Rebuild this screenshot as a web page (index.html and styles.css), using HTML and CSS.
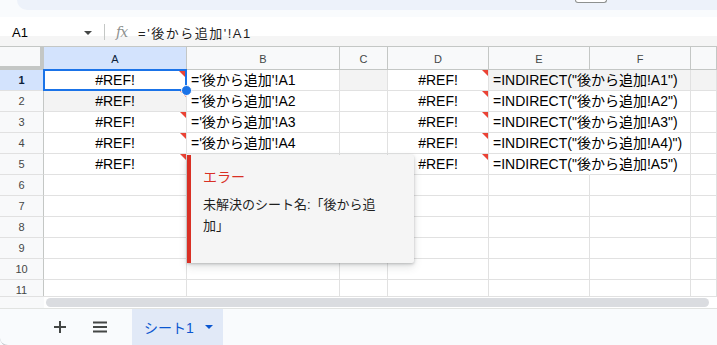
FILE: index.html
```html
<!DOCTYPE html>
<html lang="ja">
<head>
    <meta charset="UTF-8">
    <title>シート1</title>
    <link rel="stylesheet" href="styles.css">
</head>
<body>
    <!-- Верхняя панель -->
    <div class="topbar">
        <div class="topbar-band"><span class="topbar-btn"></span></div>
    </div>

    <!-- Строка формул -->
    <div class="formula-bar">
        <div class="name-box">
            <span>A1</span>
            <span class="caret"></span>
        </div>
        <div class="fx-sep"></div>
        <span class="fx">fx</span>
        <span class="formula">='後から追加'!A1</span>
    </div>

    <!-- Таблица -->
    <div class="grid-wrap">
        <div class="grid">
            <div class="corner"></div>
            <div class="col-head selected">A</div>
            <div class="col-head">B</div>
            <div class="col-head">C</div>
            <div class="col-head">D</div>
            <div class="col-head">E</div>
            <div class="col-head">F</div>
            <div class="col-head"></div>

            <div class="row-head selected">1</div>
            <div class="cell center err active">#REF!<span class="tri"></span><span class="sel"></span><span class="handle"></span></div>
            <div class="cell">='後から追加'!A1</div>
            <div class="cell grey"></div>
            <div class="cell center err">#REF!<span class="tri"></span></div>
            <div class="cell grey no-line"><span class="spill">=INDIRECT("後から追加!A1")</span></div>
            <div class="cell grey"></div>
            <div class="cell grey"></div>

            <div class="row-head">2</div>
            <div class="cell center err grey">#REF!<span class="tri"></span></div>
            <div class="cell">='後から追加'!A2</div>
            <div class="cell"></div>
            <div class="cell center err">#REF!<span class="tri"></span></div>
            <div class="cell no-line"><span class="spill">=INDIRECT("後から追加!A2")</span></div>
            <div class="cell"></div>
            <div class="cell"></div>

            <div class="row-head">3</div>
            <div class="cell center err">#REF!<span class="tri"></span></div>
            <div class="cell">='後から追加'!A3</div>
            <div class="cell"></div>
            <div class="cell center err">#REF!<span class="tri"></span></div>
            <div class="cell no-line"><span class="spill">=INDIRECT("後から追加!A3")</span></div>
            <div class="cell"></div>
            <div class="cell"></div>

            <div class="row-head">4</div>
            <div class="cell center err">#REF!<span class="tri"></span></div>
            <div class="cell">='後から追加'!A4</div>
            <div class="cell"></div>
            <div class="cell center err">#REF!<span class="tri"></span></div>
            <div class="cell no-line"><span class="spill">=INDIRECT("後から追加!A4)")</span></div>
            <div class="cell"></div>
            <div class="cell"></div>

            <div class="row-head">5</div>
            <div class="cell center err">#REF!<span class="tri"></span></div>
            <div class="cell"></div>
            <div class="cell"></div>
            <div class="cell center err">#REF!<span class="tri"></span></div>
            <div class="cell no-line"><span class="spill">=INDIRECT("後から追加!A5")</span></div>
            <div class="cell"></div>
            <div class="cell"></div>

            <div class="row-head">6</div>
            <div class="cell"></div><div class="cell"></div><div class="cell"></div><div class="cell"></div><div class="cell"></div><div class="cell"></div><div class="cell"></div>
            <div class="row-head">7</div>
            <div class="cell"></div><div class="cell"></div><div class="cell"></div><div class="cell"></div><div class="cell"></div><div class="cell"></div><div class="cell"></div>
            <div class="row-head">8</div>
            <div class="cell"></div><div class="cell"></div><div class="cell"></div><div class="cell"></div><div class="cell"></div><div class="cell"></div><div class="cell"></div>
            <div class="row-head">9</div>
            <div class="cell"></div><div class="cell"></div><div class="cell"></div><div class="cell"></div><div class="cell"></div><div class="cell"></div><div class="cell"></div>
            <div class="row-head">10</div>
            <div class="cell"></div><div class="cell"></div><div class="cell"></div><div class="cell"></div><div class="cell"></div><div class="cell"></div><div class="cell"></div>
            <div class="row-head">11</div>
            <div class="cell"></div><div class="cell"></div><div class="cell"></div><div class="cell"></div><div class="cell"></div><div class="cell"></div><div class="cell"></div>
        </div>

        <!-- Всплывающая ошибка -->
        <div class="error-tip">
            <div class="error-title">エラー</div>
            <div class="error-text">未解決のシート名:「後から追加」</div>
        </div>
    </div>

    <!-- Полоса прокрутки -->
    <div class="hscroll">
        <div class="hscroll-left"></div>
        <div class="hscroll-track"><div class="hscroll-thumb"></div></div>
    </div>

    <!-- Нижняя панель листов -->
    <div class="sheet-bar">
        <span class="sheet-icon">
            <svg width="14" height="14" viewBox="0 0 14 14"><path d="M7 1v12M1 7h12" stroke="#444746" stroke-width="2" fill="none"/></svg>
        </span>
        <span class="sheet-icon">
            <svg width="16" height="12" viewBox="0 0 16 12"><path d="M1 1.5h14M1 6h14M1 10.5h14" stroke="#444746" stroke-width="2" fill="none"/></svg>
        </span>
        <div class="sheet-tab">
            <span>シート1</span>
            <span class="tab-caret"></span>
        </div>
    </div>
</body>
</html>
```

FILE: styles.css
```css
body {
    margin: 0;
    width: 717px;
    height: 345px;
    overflow: hidden;
    background: #f9fbfd;
    font-family: "Liberation Sans", Arial, "Noto Sans CJK JP", sans-serif;
    color: #000;
}

/* Верхняя панель */
.topbar {
    height: 17px;
    padding-left: 17px;
}

.topbar-band {
    height: 10px;
    background: #edf2fa;
    border-bottom-left-radius: 10px;
    display: flex;
    justify-content: flex-end;
    padding-right: 110px;
}

.topbar-btn {
    width: 30px;
    height: 2px;
    border: 1px solid #8e918f;
    border-top: none;
    border-radius: 0 0 4px 4px;
    background: #fff;
}

/* Строка формул */
.formula-bar {
    height: 29px;
    background: linear-gradient(#fff 19px, #f5f5f5 19px);
    display: flex;
    align-items: center;
    font-size: 13px;
}

.name-box {
    width: 92px;
    padding-left: 12px;
    box-sizing: border-box;
    display: flex;
    justify-content: space-between;
    align-items: center;
    padding-top: 2px;
}

.caret {
    width: 0;
    height: 0;
    border-left: 4px solid transparent;
    border-right: 4px solid transparent;
    border-top: 4px solid #444746;
}

.fx-sep {
    width: 1px;
    height: 16px;
    background: #c4c7c5;
    margin-left: 12px;
}

.fx {
    font-family: "DejaVu Serif", serif;
    font-style: italic;
    color: #8e918f;
    font-size: 14px;
    margin-left: 11px;
    letter-spacing: -1px;
}

.formula {
    margin-left: 11px;
    letter-spacing: 1.5px;
    padding-top: 2px;
    color: #1f1f1f;
}

/* Таблица */
.grid-wrap {
    position: relative;
    height: 249px;
    overflow: hidden;
    border-top: 1px solid #c4c7c5;
    border-bottom: 1px solid #e1e1e1;
    background: #fff;
}

.grid {
    display: grid;
    grid-template-columns: 44px 143px 153px 48px 101px 101px 101px 26px;
    grid-template-rows: 23px repeat(11, 21px);
}

.corner {
    background: #f8f9fa;
    border-right: 4px solid #c4c7c5;
    border-bottom: 4px solid #c4c7c5;
    box-sizing: border-box;
    background-clip: padding-box;
}

.col-head {
    background: #f8f9fa;
    border-right: 1px solid #c4c7c5;
    border-bottom: 1px solid #c4c7c5;
    font-size: 11px;
    color: #444746;
    display: flex;
    align-items: center;
    justify-content: center;
    box-sizing: border-box;
    padding-top: 1px;
}

.row-head {
    background: #f8f9fa;
    border-right: 1px solid #c4c7c5;
    border-bottom: 1px solid #e1e1e1;
    font-size: 11px;
    color: #444746;
    display: flex;
    align-items: center;
    justify-content: center;
    box-sizing: border-box;
}

.col-head.selected,
.row-head.selected {
    background: #d3e3fd;
    color: #0b1f3a;
}

.row-head.selected {
    font-weight: bold;
}

.cell {
    border-right: 1px solid #e1e1e1;
    border-bottom: 1px solid #e1e1e1;
    box-sizing: border-box;
    font-size: 14px;
    line-height: 20px;
    padding-left: 4px;
    white-space: nowrap;
}

.cell.grey {
    background: #f3f3f3;
}

.cell.no-line {
    border-right-color: transparent;
}

.cell.center {
    text-align: center;
    padding-left: 0;
}

.cell.err {
    position: relative;
}

/* текст, который заходит на соседнюю ячейку */
.spill {
    position: relative;
    z-index: 1;
}

.tri {
    position: absolute;
    top: 0;
    right: 0;
    width: 0;
    height: 0;
    border-left: 6px solid transparent;
    border-top: 6px solid #ea4335;
}

.active .tri {
    top: 1px;
    right: 1px;
    z-index: 3;
}

.sel {
    position: absolute;
    top: -1px;
    left: -1px;
    right: -1px;
    bottom: -1px;
    border: 2px solid #1a73e8;
    z-index: 2;
}

.handle {
    position: absolute;
    right: -6px;
    bottom: -6px;
    width: 9px;
    height: 9px;
    border-radius: 50%;
    background: #1a73e8;
    border: 1px solid #fff;
    z-index: 4;
}

/* Ошибка */
.error-tip {
    position: absolute;
    left: 187px;
    top: 108px;
    width: 227px;
    height: 108px;
    box-sizing: border-box;
    background: #f5f5f5;
    border-left: 4px solid #d93025;
    border-radius: 0 2px 2px 0;
    box-shadow: 0 1px 3px rgba(60, 64, 67, 0.3), 0 4px 8px rgba(60, 64, 67, 0.15);
    padding: 12px 31px 0 12px;
    z-index: 5;
}

.error-title {
    color: #d93025;
    font-size: 14px;
    line-height: 20px;
}

.error-text {
    margin-top: 7px;
    font-size: 13px;
    line-height: 21px;
    color: #1f1f1f;
}

/* Полоса прокрутки */
.hscroll {
    height: 11px;
    display: flex;
    background: #fff;
}

.hscroll-left {
    width: 44px;
    background: #f8f9fa;
}

.hscroll-track {
    flex: 1;
    padding: 1px 8px 1px 2px;
}

.hscroll-thumb {
    height: 9px;
    background: #dadce0;
    border-radius: 5px;
}

/* Нижняя панель */
.sheet-bar {
    height: 38px;
    border-top: 1px solid #e1e3e1;
    border-bottom: 1px solid #bdc1c6;
    border-bottom-left-radius: 8px;
    box-sizing: border-box;
    display: flex;
    align-items: stretch;
    padding-left: 40px;
}

.sheet-icon {
    width: 40px;
    display: flex;
    align-items: center;
    justify-content: center;
}

.sheet-tab {
    margin-left: 12px;
    width: 91px;
    background: #e1e9f7;
    color: #0b57d0;
    font-size: 14px;
    display: flex;
    align-items: center;
    padding-left: 12px;
    box-sizing: border-box;
}

.tab-caret {
    margin-left: 11px;
    width: 0;
    height: 0;
    border-left: 4px solid transparent;
    border-right: 4px solid transparent;
    border-top: 4px solid #0b57d0;
}
```
